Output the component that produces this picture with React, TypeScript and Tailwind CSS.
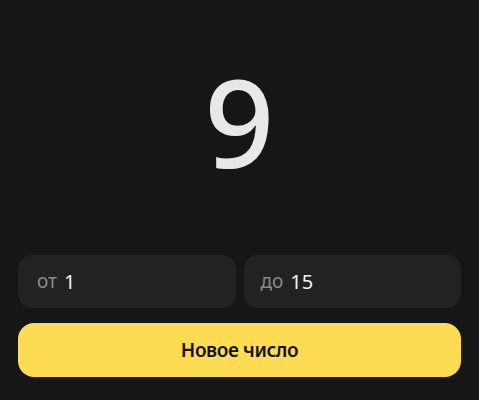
export default function App() {
  const font = { fontFamily: '"Noto Sans", "Open Sans", sans-serif' };
  return (
    <div className="w-[479px] h-[400px] bg-[#161616] flex flex-col px-[18px]" style={font}>
      <div className="h-[255px] flex items-center justify-center pb-[14px]">
        <span className="text-[122px] leading-none text-[#e8e8e8] font-medium">9</span>
      </div>
      <div className="grid grid-cols-2 gap-[8px]">
        <div className="h-[53px] rounded-[14px] bg-[#222222] flex items-center px-[19px] gap-[7px]">
          <span className="text-[19px] text-[#8a8a8a]">от</span>
          <span className="text-[20px] text-[#f2f2f2]">1</span>
        </div>
        <div className="h-[53px] rounded-[14px] bg-[#222222] flex items-center px-[17px] gap-[7px]">
          <span className="text-[19px] text-[#8a8a8a]">до</span>
          <span className="text-[20px] text-[#f2f2f2]">15</span>
        </div>
      </div>
      <button className="mt-[15px] h-[54px] rounded-[16px] bg-[#fddb52] flex items-center justify-center text-[19px] font-semibold tracking-[-0.4px] text-[#111]">
        Новое число
      </button>
    </div>
  );
}
